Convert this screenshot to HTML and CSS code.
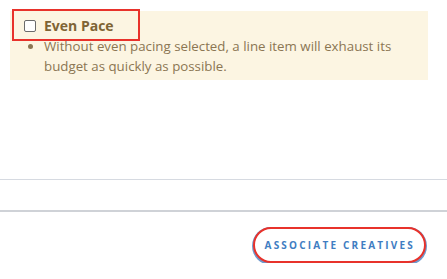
FILE: index.html
```html
<!DOCTYPE html>
<html lang="en">
<head>
  <meta charset="UTF-8" />
  <meta name="viewport" content="width=device-width, initial-scale=1" />
  <title>Pacing</title>
  <link rel="stylesheet" href="styles.css">
</head>
<body>

<div class="pace-note">
  <label class="pace-check" for="even-pace">
    <input type="checkbox" id="even-pace" name="even_pace" />
    <span>Even Pace</span>
  </label>
  <ul class="pace-help">
    <li>Without even pacing selected, a line item will exhaust its budget as quickly as possible.</li>
  </ul>
</div>

<div class="rule rule-light"></div>
<div class="rule rule-dark"></div>

<div class="actions">
  <button type="button" class="btn-outline">Associate Creatives</button>
</div>

</body>
</html>
```

FILE: styles.css
```css
body {
  font-family: 'Open Sans', 'Noto Sans', sans-serif;
  background: #fff;
  margin: 0;
  color: #333;
}
.pace-note {
  margin: 11px 19px 0 10px;
  background: #fcf5e2;
  padding: 5px 14px 4px 14px;
}
.pace-check {
  display: flex;
  align-items: center;
  gap: 8px;
  width: fit-content;
  margin: -7px 0 -5px -12px;
  padding: 5px 24px 3px 10px;
  border: 2px solid #e8322b;
  font-size: 14px;
  font-weight: 700;
  line-height: 20px;
  color: #7f6434;
}
.pace-check input {
  appearance: none;
  width: 12px;
  height: 12px;
  margin: 0;
  border: 1.5px solid #6b6b6b;
  border-radius: 2px;
  background: #fff;
  box-sizing: border-box;
}
.pace-help {
  margin: 0;
  padding-left: 20px;
  font-size: 13.3px;
  line-height: 20px;
  color: #8b7653;
}
.rule {
  margin-left: 0;
  margin-right: 0;
}
.rule-light {
  margin-top: 99px;
  height: 1px;
  background: #d6dae1;
}
.rule-dark {
  margin-top: 30px;
  height: 2px;
  background: #cfd2d7;
}
.actions {
  display: flex;
  justify-content: flex-end;
  padding: 15px 21px 0 0;
}
.btn-outline {
  height: 36px;
  padding: 0 9px 0 10px;
  border: 2px solid #e8322b;
  border-radius: 18px;
  background: #fff;
  box-shadow: 0 1px 0 1px #6f98cc;
  font-family: inherit;
  font-size: 10px;
  font-weight: 700;
  letter-spacing: 2.2px;
  text-transform: uppercase;
  color: #3f7dc2;
  cursor: pointer;
}
```
